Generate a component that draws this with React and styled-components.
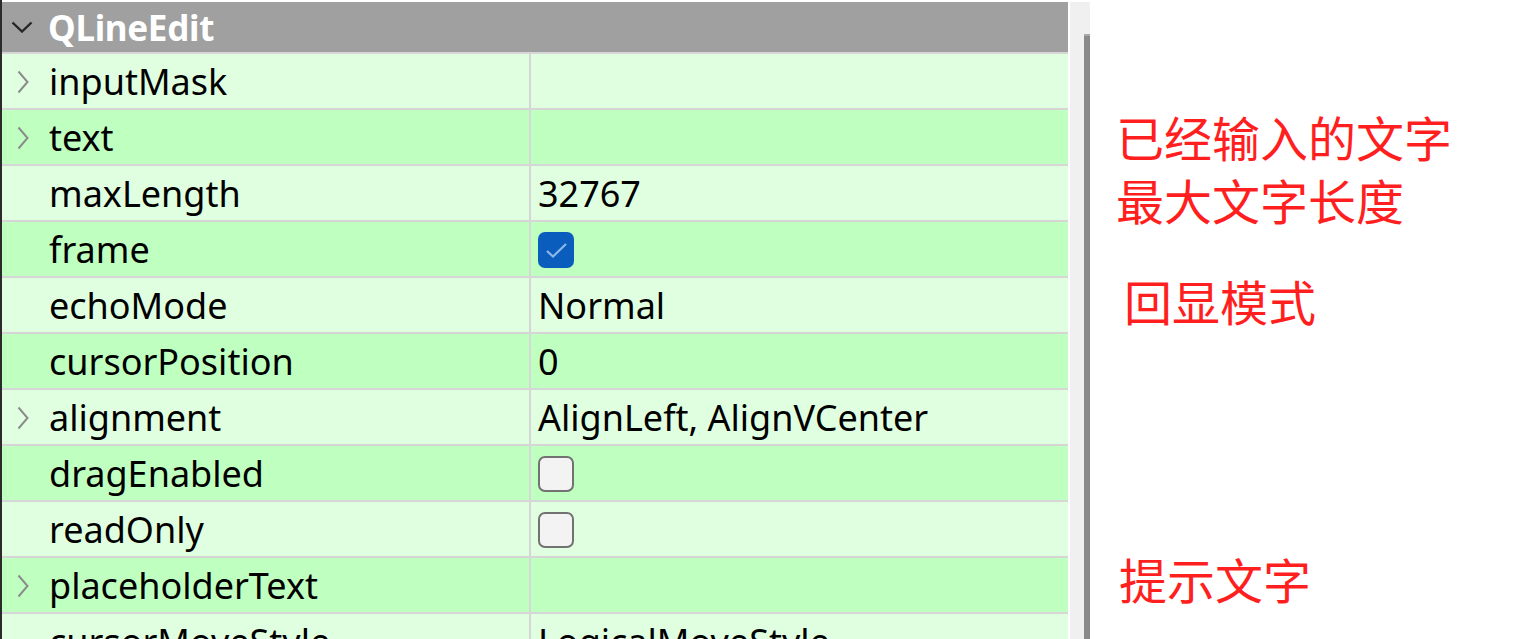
import React from 'react'
import styled, { createGlobalStyle } from 'styled-components'

const GlobalStyle = createGlobalStyle`
  html, body {
    margin: 0;
    padding: 0;
    background: #ffffff;
  }
  body {
    font-family: "Noto Sans", "Noto Sans CJK SC", sans-serif;
  }
`

const rows = [
  { name: 'inputMask', expand: true },
  { name: 'text', expand: true },
  { name: 'maxLength', value: '32767' },
  { name: 'frame', check: true },
  { name: 'echoMode', value: 'Normal' },
  { name: 'cursorPosition', value: '0' },
  { name: 'alignment', expand: true, value: 'AlignLeft, AlignVCenter' },
  { name: 'dragEnabled', check: false },
  { name: 'readOnly', check: false },
  { name: 'placeholderText', expand: true },
  { name: 'cursorMoveStyle', value: 'LogicalMoveStyle' },
]

const notes = [
  { text: '已经输入的文字', top: 112, indent: 0 },
  { text: '最大文字长度', top: 15, indent: 0 },
  { text: '回显模式', top: 53, indent: 8 },
  { text: '提示文字', top: 230, indent: 3 },
]

const ChevronDown = () => (
  <svg width="22" height="12" viewBox="0 0 22 12">
    <path d="M1.5 1.5 L11 10.5 L20.5 1.5" fill="none" stroke="#262626" strokeWidth="2.4" />
  </svg>
)

const ChevronRight = () => (
  <svg width="12" height="24" viewBox="0 0 12 24">
    <path d="M1.5 1.5 L10.5 12 L1.5 22.5" fill="none" stroke="#8c8c8c" strokeWidth="2" />
  </svg>
)

const CheckBox = ({ checked }) => (
  <Box checked={checked}>
    {checked && (
      <svg width="36" height="36" viewBox="0 0 36 36">
        <path d="M9 19 L15 24.5 L28 12" fill="none" stroke="#8fb8ea" strokeWidth="2.2" />
      </svg>
    )}
  </Box>
)

const App = () => {
  return (
    <>
      <GlobalStyle />
      <Page>
        <Editor>
          <Header>
            <Toggle><ChevronDown /></Toggle>
            <Title>QLineEdit</Title>
          </Header>
          {rows.map((r, i) => (
            <Row key={r.name} alt={i % 2 === 1}>
              <NameCell>
                <Gutter>{r.expand && <ChevronRight />}</Gutter>
                <Label>{r.name}</Label>
              </NameCell>
              <ValueCell>
                {r.check !== undefined ? <CheckBox checked={r.check} /> : <Label>{r.value}</Label>}
              </ValueCell>
            </Row>
          ))}
        </Editor>
        <Track>
          <Thumb />
        </Track>
        <Notes>
          {notes.map((n) => (
            <Note key={n.text} top={n.top} indent={n.indent}>{n.text}</Note>
          ))}
        </Notes>
      </Page>
    </>
  )
}

const Page = styled.div`
  display: flex;
  align-items: stretch;
  height: 639px;
  overflow: hidden;
`

const Editor = styled.div`
  width: 1066px;
  flex-shrink: 0;
  border-left: 2px solid #2b2b2b;
  padding-top: 2px;
  display: flex;
  flex-direction: column;
`

const Header = styled.div`
  height: 50px;
  flex-shrink: 0;
  background: #a0a0a0;
  border-bottom: 2px solid #d6d6d6;
  display: flex;
  align-items: center;
`

const Toggle = styled.div`
  width: 46px;
  display: flex;
  justify-content: center;
  padding-right: 6px;
  box-sizing: border-box;
`

const Title = styled.span`
  color: #ffffff;
  font-weight: 700;
  font-size: 35px;
  letter-spacing: -0.3px;
`

const Row = styled.div`
  height: 54px;
  flex-shrink: 0;
  display: flex;
  background: ${(p) => (p.alt ? '#bfffbf' : '#e0ffe0')};
  border-bottom: 2px solid #d6d6d6;
`

const NameCell = styled.div`
  width: 527px;
  flex-shrink: 0;
  display: flex;
  align-items: center;
  border-right: 2px solid #d6d6d6;
`

const Gutter = styled.div`
  width: 47px;
  display: flex;
  justify-content: center;
  padding-right: 5px;
  box-sizing: border-box;
  margin-top: 2px;
`

const Label = styled.span`
  font-size: 36px;
  color: #000000;
  white-space: nowrap;
`

const ValueCell = styled.div`
  flex: 1;
  display: flex;
  align-items: center;
  padding-left: 7px;
`

const Box = styled.div`
  width: 36px;
  height: 36px;
  box-sizing: border-box;
  border-radius: 7px;
  background: ${(p) => (p.checked ? '#0a5cbd' : '#f3f3f3')};
  border: ${(p) => (p.checked ? 'none' : '2px solid #727272')};
  display: flex;
  margin-top: 2px;
`

const Track = styled.div`
  width: 20px;
  flex-shrink: 0;
  margin-left: 2px;
  margin-top: 2px;
  background: #f0f0f0;
  display: flex;
  flex-direction: column;
  align-items: flex-end;
  padding-top: 32px;
`

const Thumb = styled.div`
  width: 6px;
  flex: 1;
  background: #8a8a8a;
  border-top: 2px solid #a9a9a9;
`

const Notes = styled.div`
  display: flex;
  flex-direction: column;
  padding-left: 26px;
`

const Note = styled.div`
  margin-top: ${(p) => p.top}px;
  padding-left: ${(p) => p.indent}px;
  height: 48px;
  line-height: 48px;
  font-family: "Noto Sans CJK SC", sans-serif;
  font-size: 48px;
  color: #ff1f1f;
  white-space: nowrap;
`

export default App
